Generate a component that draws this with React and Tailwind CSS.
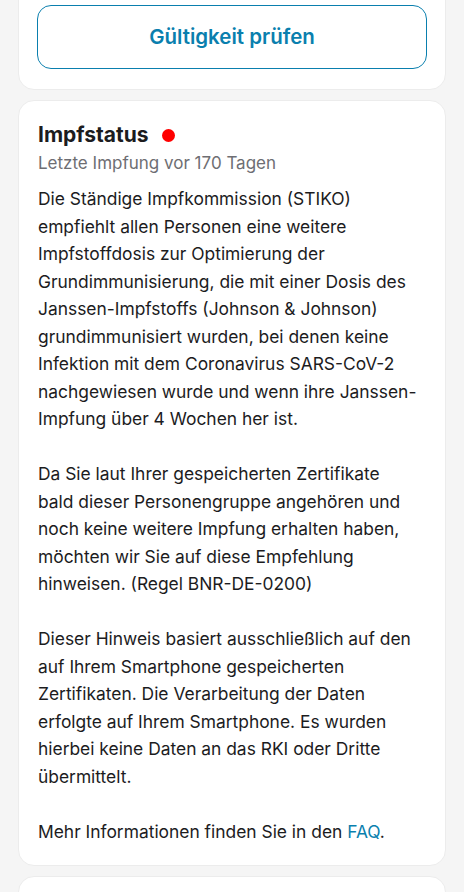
export default function App() {
  return (
    <div className="min-h-[892px] bg-[#f5f5f5] overflow-hidden" style={{ fontFamily: "Inter, 'Noto Sans', sans-serif" }}>
      <div className="flex flex-col gap-[10px] px-[18px]">
        <div className="-mt-[40px] rounded-[16px] border border-[#ececec] bg-white px-[18px] pt-[44px] pb-[20px]">
          <button className="flex h-[64px] w-full items-center justify-center rounded-[14px] border border-[#0a7fae] bg-white text-[20.5px] font-semibold text-[#0a7fae]">
            Gültigkeit prüfen
          </button>
        </div>
        <div className="rounded-[16px] border border-[#ececec] bg-white pl-[19px] pr-[14px] pt-[20px] pb-[20px] text-[#1c1c1e]">
          <div className="flex items-center gap-[13px]">
            <h2 className="text-[21px] font-bold leading-[28px]">Impfstatus</h2>
            <span className="h-[13px] w-[13px] rounded-full bg-[#ff0000]" />
          </div>
          <p className="text-[17px] leading-[28px] text-[#6e6e73]">Letzte Impfung vor 170 Tagen</p>
          <div className="mt-[8px] whitespace-nowrap text-[17.4px] leading-[27.5px]">
            <p>
              Die Ständige Impfkommission (STIKO)<br />
              empfiehlt allen Personen eine weitere<br />
              Impfstoffdosis zur Optimierung der<br />
              Grundimmunisierung, die mit einer Dosis des<br />
              Janssen-Impfstoffs (Johnson &amp; Johnson)<br />
              grundimmunisiert wurden, bei denen keine<br />
              Infektion mit dem Coronavirus SARS-CoV-2<br />
              nachgewiesen wurde und wenn ihre Janssen-<br />
              Impfung über 4 Wochen her ist.
            </p>
            <p className="mt-[27.5px]">
              Da Sie laut Ihrer gespeicherten Zertifikate<br />
              bald dieser Personengruppe angehören und<br />
              noch keine weitere Impfung erhalten haben,<br />
              möchten wir Sie auf diese Empfehlung<br />
              hinweisen. (Regel BNR-DE-0200)
            </p>
            <p className="mt-[27.5px]">
              Dieser Hinweis basiert ausschließlich auf den<br />
              auf Ihrem Smartphone gespeicherten<br />
              Zertifikaten. Die Verarbeitung der Daten<br />
              erfolgte auf Ihrem Smartphone. Es wurden<br />
              hierbei keine Daten an das RKI oder Dritte<br />
              übermittelt.
            </p>
            <p className="mt-[27.5px]">
              Mehr Informationen finden Sie in den <span className="text-[#0a7fae]">FAQ</span>.
            </p>
          </div>
        </div>
        <div className="h-[100px] rounded-[16px] border border-[#ececec] bg-white" />
      </div>
    </div>
  );
}
